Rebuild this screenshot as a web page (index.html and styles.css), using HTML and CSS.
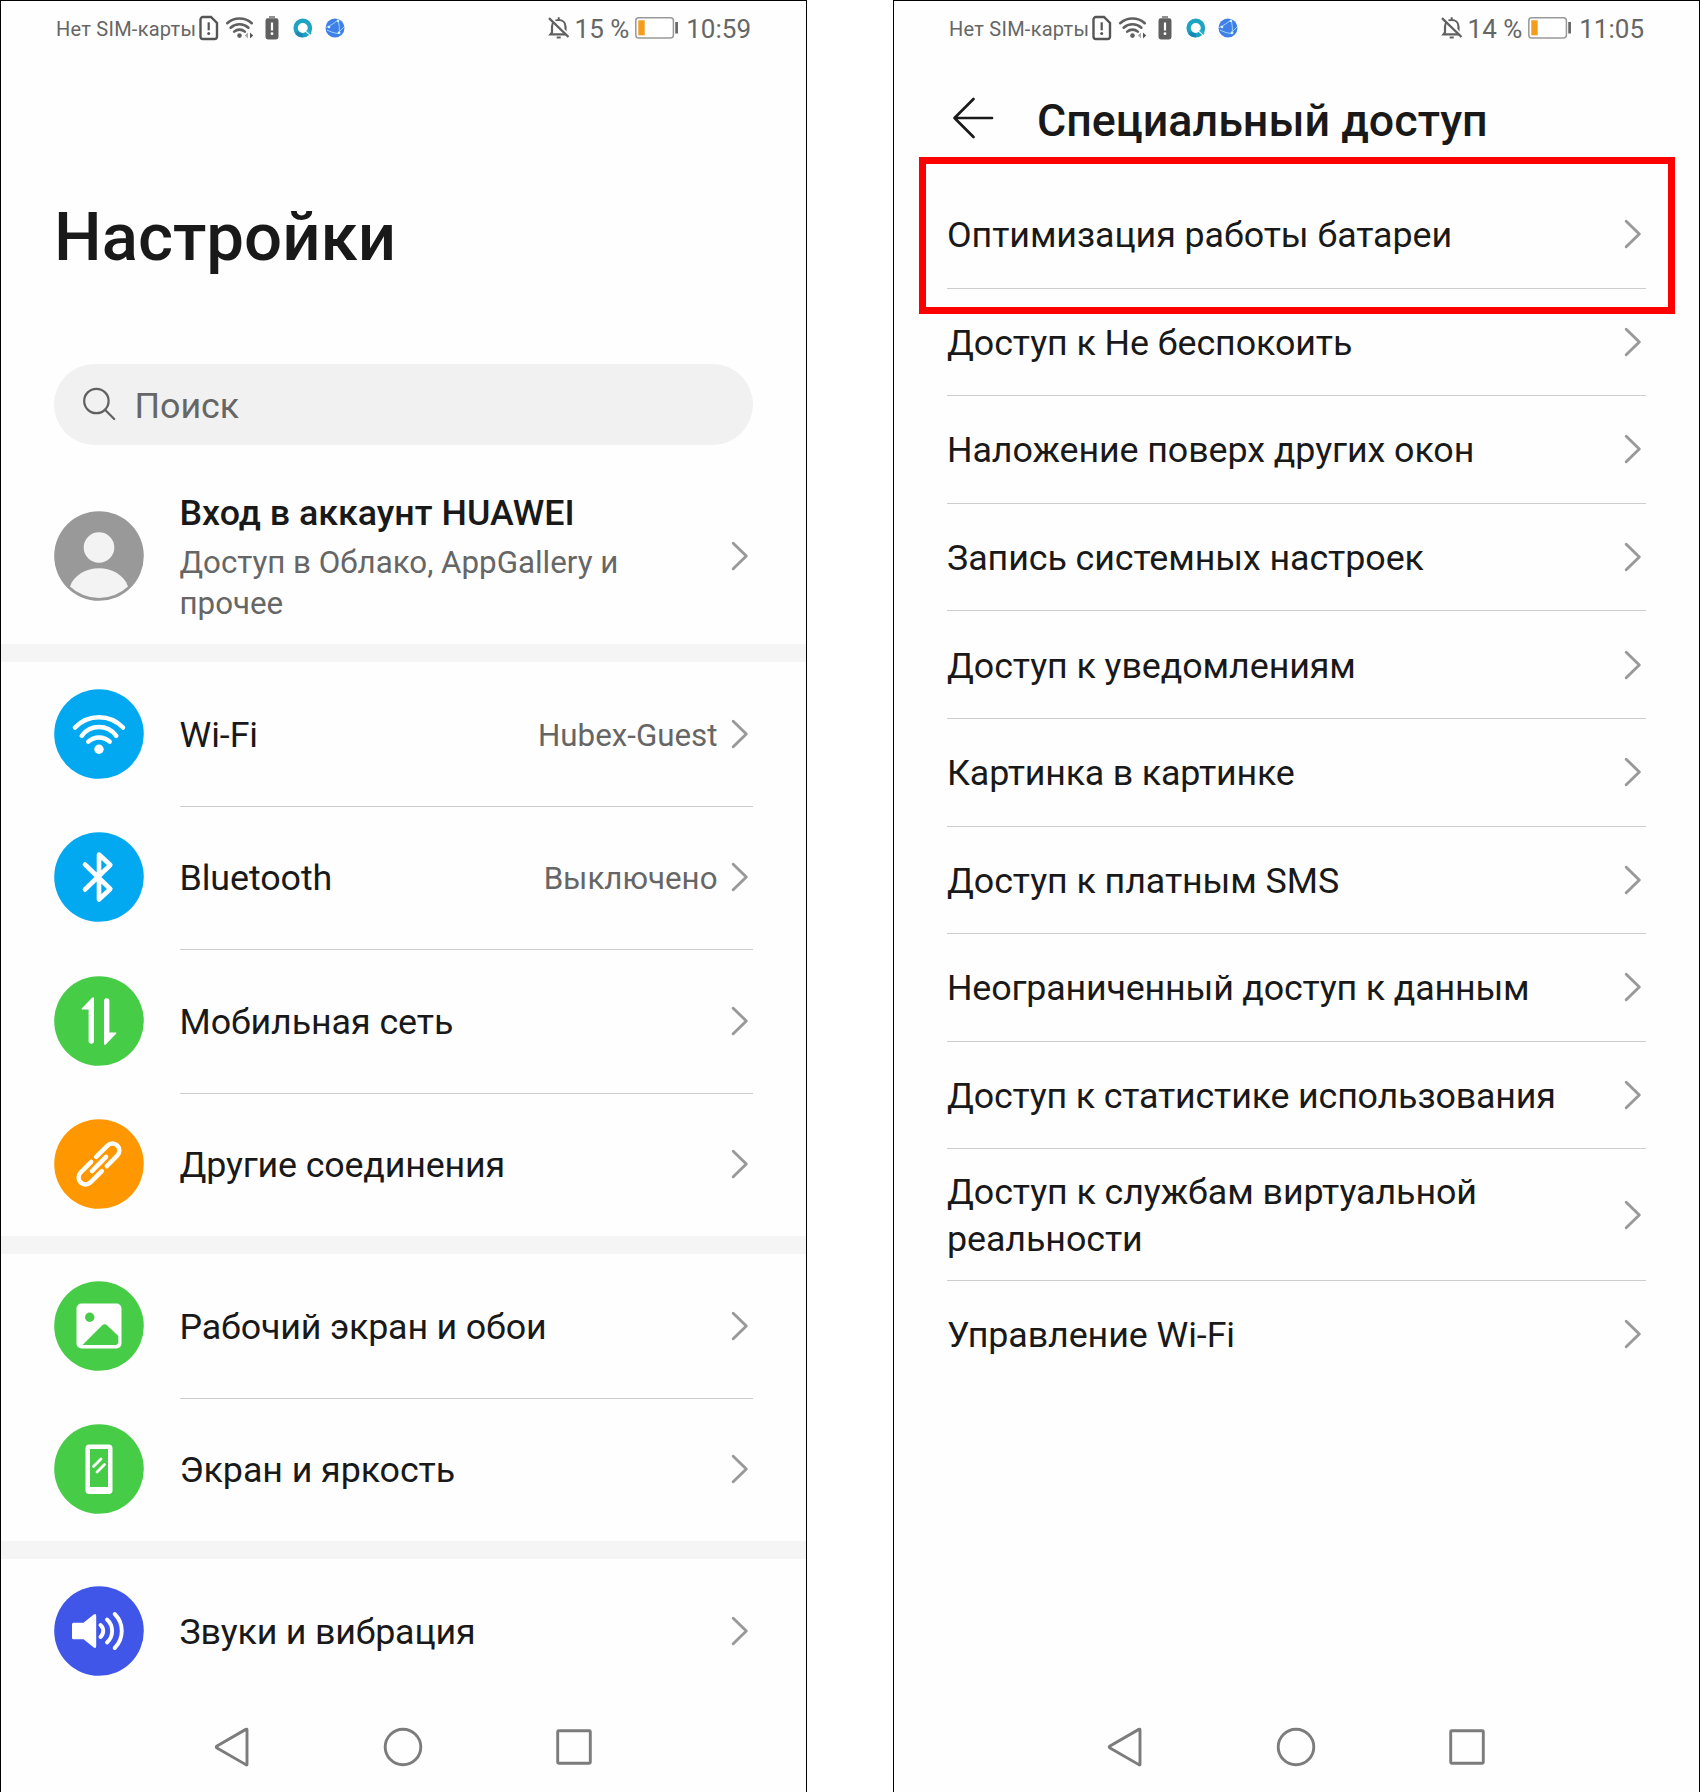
FILE: index.html
```html
<!DOCTYPE html>
<html lang="ru">
<head>
<meta charset="utf-8">
<title>Настройки</title>
<link rel="stylesheet" href="styles.css">
</head>
<body>
<svg class="sprite" aria-hidden="true">
  <symbol id="chevron" viewBox="0 0 18 30"><path d="M2.200 2.200 15.300 15 2.200 27.800" fill="none" stroke="#999" stroke-width="2.900" stroke-linecap="round" stroke-linejoin="round"/></symbol>
  <symbol id="sim" viewBox="0 0 20 26"><path d="M4 2h8l6 6v13.500a2.500 2.500 0 0 1-2.500 2.500H4a2.500 2.500 0 0 1-2.500-2.500v-17A2.500 2.500 0 0 1 4 2z" fill="none" stroke="#555" stroke-width="2.400"/><path d="M9.700 7.300v8" stroke="#555" stroke-width="2.200"/><circle cx="9.700" cy="18.600" r="1.500" fill="#555"/></symbol>
  <symbol id="wifi-status" viewBox="0 0 30 26"><g fill="none" stroke="#606060" stroke-width="2.600" stroke-linecap="round"><path d="M2.200 8.200a18.500 18.500 0 0 1 24.600 0"/><path d="M5.600 12.700a13.400 13.400 0 0 1 17.800 0"/><path d="M9.200 16.600a8 8 0 0 1 10.600 0"/></g><circle cx="14.500" cy="20.600" r="2.300" fill="#606060"/><path d="M23 17.500v6l-3.200-3z" fill="#aaa"/><path d="M25 17.500v6l3.200-3z" fill="#555"/></symbol>
  <symbol id="power" viewBox="0 0 14 26"><path d="M4 1.300h6v1.400H4z" fill="#606060"/><rect x=".5" y="3.300" width="13" height="21.200" rx="2.400" fill="#606060"/><path d="M7 7.500v8" stroke="#fff" stroke-width="2.200"/><circle cx="7" cy="18.700" r="1.400" fill="#fff"/></symbol>
  <symbol id="ring" viewBox="0 0 20 20"><circle cx="9.800" cy="10" r="7.200" fill="none" stroke="#1fa3c2" stroke-width="4.400"/><path d="M3.500 14.500A7.300 7.300 0 0 0 9.800 17.300" fill="none" stroke="#1b87b4" stroke-width="3.800"/><path d="M11.500 12 19 18.500" stroke="#fff" stroke-width="1.600"/><path d="M13.700 12.200 18 16" stroke="#25b4cc" stroke-width="2"/></symbol>
  <symbol id="globe" viewBox="0 0 20 20"><circle cx="10" cy="10" r="9.500" fill="#3f7fe8"/><path d="M13 1.200C14 6 15 11 14 16M1 9.500C6 7.500 9 5 12.500 2.500M2 12c4 2 8 3.500 12 3.500M14.500 13.500 19 9" fill="none" stroke="#a9dcf5" stroke-width=".9"/><g fill="#d5f0fb"><circle cx="13" cy="3" r="1.300"/><circle cx="4" cy="9" r="1.300"/><circle cx="14" cy="14.800" r="1.400"/></g></symbol>
  <symbol id="bell" viewBox="0 0 24 24"><path d="M5 17V10.500C5 6.500 8 4 11.700 4S18.500 6.500 18.500 10.500V16l1.700 2.400H3.500L5 16.500" fill="none" stroke="#606060" stroke-width="2.200"/><path d="M11.700 1.300V4M9.700 21.600h4" stroke="#606060" stroke-width="2"/><path d="M3.600 1.300 23 20" stroke="#fff" stroke-width="2"/><path d="M2 2.200 21.500 21" stroke="#606060" stroke-width="2.300"/></symbol>
  <symbol id="battery" viewBox="0 0 44 22"><rect x=".8" y=".8" width="37.600" height="20.200" rx="3" fill="#fff" stroke="#999" stroke-width="1.500"/><rect x="3.300" y="3.300" width="6.400" height="15" fill="#f49c1c"/><path d="M41.600 5v11.500" stroke="#666" stroke-width="2.700"/></symbol>
  <symbol id="nav-back" viewBox="0 0 40 40"><path d="M34 2.800V37.200Q34 38.500 32.800 37.600L4 21Q2.400 20 4 19L32.800 2.400Q34 1.800 34 2.800z" fill="none" stroke="#7c7c7c" stroke-width="2.900"/></symbol>
  <symbol id="nav-home" viewBox="0 0 40 40"><circle cx="20" cy="20" r="17.800" fill="none" stroke="#7c7c7c" stroke-width="2.900"/></symbol>
  <symbol id="nav-recent" viewBox="0 0 40 40"><rect x="3.700" y="3.700" width="32.600" height="32.600" rx="1" fill="none" stroke="#7c7c7c" stroke-width="2.900"/></symbol>
</svg>

<main class="screens">
  <section class="phone">
    <header class="status">
      <span class="carrier">Нет SIM-карты</span>
      <svg class="s-sim"><use href="#sim"/></svg>
      <svg class="s-wifi"><use href="#wifi-status"/></svg>
      <svg class="s-power"><use href="#power"/></svg>
      <svg class="s-ring"><use href="#ring"/></svg>
      <svg class="s-globe"><use href="#globe"/></svg>
      <div class="status-right">
        <svg class="s-bell"><use href="#bell"/></svg>
        <span class="percent">15 %</span>
        <svg class="s-battery"><use href="#battery"/></svg>
        <time class="clock">10:59</time>
      </div>
    </header>

    <h1 class="page-title">Настройки</h1>

    <div class="search">
      <svg class="search-icon" viewBox="0 0 36 36"><g fill="none" stroke="#606060" stroke-width="2.200" stroke-linecap="round"><circle cx="14.400" cy="15" r="12.200"/><path d="M23.200 24 32.200 33"/></g></svg>
      <span class="search-text">Поиск</span>
    </div>

    <div class="account">
      <svg class="badge" viewBox="-45 -45 90 90"><circle r="44.800" fill="#999"/><circle cy="-8.500" r="15.300" fill="#f3f3f3"/><path d="M-29 30.500C-25 19-13 12.300 0 12.300S25 19 29 30.500A42 42 0 0 1-29 30.500z" fill="#f3f3f3"/></svg>
      <div class="account-text">
        <div class="account-title">Вход в аккаунт HUAWEI</div>
        <div class="account-sub">Доступ в Облако, AppGallery и<br>прочее</div>
      </div>
      <svg class="chevron"><use href="#chevron"/></svg>
    </div>

    <div class="group">
      <div class="item">
        <svg class="badge" viewBox="-45 -45 90 90"><circle r="44.800" fill="#03a9f0"/><g fill="none" stroke="#fff" stroke-width="4.500" stroke-linecap="round"><path d="M-24-6.500A33 33 0 0 1 24-6.500"/><path d="M-17.300 1.800A21.500 21.500 0 0 1 17.300 1.800"/><path d="M-10.700 7.700A15.500 15.500 0 0 1 10.700 7.700"/></g><circle cy="15.300" r="4.700" fill="#fff"/></svg>
        <div class="item-body"><span class="label">Wi-Fi</span><span class="value">Hubex-Guest</span><svg class="chevron"><use href="#chevron"/></svg></div>
      </div>
      <div class="item">
        <svg class="badge" viewBox="-45 -45 90 90"><circle r="44.800" fill="#03a9f0"/><path d="M-14-12.500 11.300 12 0 22.500V-22.500L11.300-12-14 12.500" fill="none" stroke="#fff" stroke-width="4.600" stroke-linecap="round" stroke-linejoin="round"/></svg>
        <div class="item-body"><span class="label">Bluetooth</span><span class="value">Выключено</span><svg class="chevron"><use href="#chevron"/></svg></div>
      </div>
      <div class="item">
        <svg class="badge" viewBox="-45 -45 90 90"><circle r="44.800" fill="#47cc47"/><g fill="#fff"><path d="M-17.500-12.200-7-23.300Q-5-24.800-5-22.300V20a2.600 2.600 0 0 1-5.400 0V-11.500H-17z"/><path d="M17.500 12.200 7 23.300Q5 24.800 5 22.300V-20a2.600 2.600 0 0 1 5.400 0V11.500H17z"/></g></svg>
        <div class="item-body"><span class="label">Мобильная сеть</span><svg class="chevron"><use href="#chevron"/></svg></div>
      </div>
      <div class="item">
        <svg class="badge" viewBox="-45 -45 90 90"><circle r="44.800" fill="#ff9800"/><g transform="rotate(-45)" fill="none" stroke="#fff" stroke-width="4.400" stroke-linecap="round"><path d="M3-7H19A7 7 0 0 1 19 7H4"/><path d="M-3 7H-19A7 7 0 0 1-19-7H-4"/><path d="M-10 0H10"/></g></svg>
        <div class="item-body"><span class="label tight">Другие соединения</span><svg class="chevron"><use href="#chevron"/></svg></div>
      </div>
    </div>

    <div class="group">
      <div class="item">
        <svg class="badge" viewBox="-45 -45 90 90"><circle r="44.800" fill="#47cc47"/><rect x="-22.500" y="-22.500" width="45" height="45" rx="5" fill="#fff"/><circle cx="-9.300" cy="-8.700" r="4.700" fill="#47cc47"/><path d="M-16.500 19 3-.5Q5.500-3 8-.7L19.300 10V17L17.300 19z" fill="#47cc47"/></svg>
        <div class="item-body"><span class="label tight">Рабочий экран и обои</span><svg class="chevron"><use href="#chevron"/></svg></div>
      </div>
      <div class="item">
        <svg class="badge" viewBox="-45 -45 90 90"><circle r="44.800" fill="#47cc47"/><rect x="-13.500" y="-24.500" width="27" height="49.500" rx="3.800" fill="#fff"/><path d="M-9-20H9V18H-9z" fill="#47cc47"/><path d="M-5.500-2.500 2-10M-2 3 5.500-4.500" stroke="#fff" stroke-width="2.800" stroke-linecap="round"/></svg>
        <div class="item-body"><span class="label">Экран и яркость</span><svg class="chevron"><use href="#chevron"/></svg></div>
      </div>
    </div>

    <div class="group">
      <div class="item">
        <svg class="badge" viewBox="-45 -45 90 90"><circle r="44.800" fill="#3f56e8"/><path d="M-25.500-8.300H-15.500L-5.500-16.300Q-2.800-18-2.800-15V15Q-2.800 18-5.500 16.300L-15.500 8.300H-25.500Q-27 8.300-27 6.800V-6.800Q-27-8.300-25.500-8.300z" fill="#fff"/><g fill="none" stroke="#fff" stroke-width="3.900" stroke-linecap="round"><path d="M1.500-6A8 8 0 0 1 1.500 6"/><path d="M8-11.500A15.500 15.500 0 0 1 8 11.500"/><path d="M15.700-17A24 24 0 0 1 15.700 17"/></g></svg>
        <div class="item-body"><span class="label tight">Звуки и вибрация</span><svg class="chevron"><use href="#chevron"/></svg></div>
      </div>
    </div>

    <nav class="nav">
      <svg><use href="#nav-back"/></svg>
      <svg><use href="#nav-home"/></svg>
      <svg><use href="#nav-recent"/></svg>
    </nav>
  </section>

  <section class="phone">
    <header class="status">
      <span class="carrier">Нет SIM-карты</span>
      <svg class="s-sim"><use href="#sim"/></svg>
      <svg class="s-wifi"><use href="#wifi-status"/></svg>
      <svg class="s-power"><use href="#power"/></svg>
      <svg class="s-ring"><use href="#ring"/></svg>
      <svg class="s-globe"><use href="#globe"/></svg>
      <div class="status-right">
        <svg class="s-bell"><use href="#bell"/></svg>
        <span class="percent">14 %</span>
        <svg class="s-battery"><use href="#battery"/></svg>
        <time class="clock">11:05</time>
      </div>
    </header>

    <div class="toolbar">
      <svg class="back" viewBox="0 0 44 44"><path d="M22.500 3 3.500 22 22.500 41M3.500 22H41" fill="none" stroke="#1a1a1a" stroke-width="2.700" stroke-linecap="round" stroke-linejoin="round"/></svg>
      <h2 class="toolbar-title">Специальный доступ</h2>
    </div>

    <div class="access">
      <div class="row"><span class="label">Оптимизация работы батареи</span><svg class="chevron"><use href="#chevron"/></svg></div>
      <div class="row"><span class="label">Доступ к Не беспокоить</span><svg class="chevron"><use href="#chevron"/></svg></div>
      <div class="row"><span class="label">Наложение поверх других окон</span><svg class="chevron"><use href="#chevron"/></svg></div>
      <div class="row"><span class="label">Запись системных настроек</span><svg class="chevron"><use href="#chevron"/></svg></div>
      <div class="row"><span class="label">Доступ к уведомлениям</span><svg class="chevron"><use href="#chevron"/></svg></div>
      <div class="row"><span class="label tight">Картинка в картинке</span><svg class="chevron"><use href="#chevron"/></svg></div>
      <div class="row"><span class="label">Доступ к платным SMS</span><svg class="chevron"><use href="#chevron"/></svg></div>
      <div class="row"><span class="label tight">Неограниченный доступ к данным</span><svg class="chevron"><use href="#chevron"/></svg></div>
      <div class="row"><span class="label tight">Доступ к статистике использования</span><svg class="chevron"><use href="#chevron"/></svg></div>
      <div class="row row-tall"><span class="label">Доступ к службам виртуальной<br>реальности</span><svg class="chevron"><use href="#chevron"/></svg></div>
      <div class="row"><span class="label">Управление Wi-Fi</span><svg class="chevron"><use href="#chevron"/></svg></div>
      <div class="highlight"></div>
    </div>

    <nav class="nav">
      <svg><use href="#nav-back"/></svg>
      <svg><use href="#nav-home"/></svg>
      <svg><use href="#nav-recent"/></svg>
    </nav>
  </section>
</main>
</body>
</html>
```
FILE: styles.css
```css
* { box-sizing: border-box; }

body {
  margin: 0;
  background: #fff;
  color: #191919;
  font-family: Roboto, "Noto Sans", sans-serif;
}

svg { display: block; flex: none; }
.sprite { position: absolute; width: 0; height: 0; }

.screens {
  display: flex;
  justify-content: space-between;
  width: 1700px;
  height: 1792px;
}

.phone {
  display: flex;
  flex-direction: column;
  width: 807px;
  height: 1792px;
  border: 1px solid #000;
  border-bottom: 0;
  background: #fefefe;
}

/* Status bar */
.status {
  display: flex;
  align-items: center;
  height: 53px;
  padding: 0 55px;
  color: #666;
  white-space: nowrap;
}
.carrier { width: 143px; padding-top: 3px; font-size: 20px; letter-spacing: 0.25px; }
.s-sim { width: 20px; height: 26px; }
.s-wifi { width: 30px; height: 26px; margin-left: 6px; }
.s-power { width: 14px; height: 26px; margin-left: 10px; }
.s-ring { width: 20px; height: 20px; margin-left: 14px; }
.s-globe { width: 20px; height: 20px; margin-left: 12px; }
.status-right { display: flex; align-items: center; margin-left: auto; }
.s-bell { width: 24px; height: 24px; }
.percent { margin-left: 4px; padding-top: 2px; font-size: 26px; }
.s-battery { width: 44px; height: 22px; margin-left: 6px; }
.clock { margin-left: 7px; padding-top: 2px; font-size: 26px; }

/* Settings home */
.page-title {
  height: 80px;
  margin: 143px 0 0 53px;
  font-size: 67.2px;
  font-weight: 500;
  line-height: 80px;
}
.search {
  display: flex;
  align-items: center;
  height: 81px;
  margin: 86.500px 53px 0;
  padding-left: 28px;
  border-radius: 41px;
  background: #f1f1f1;
  color: #666;
  font-size: 35.800px;
}
.search-icon { width: 36px; height: 36px; }
.search-text { margin-left: 16.500px; padding-top: 4px; }

.account {
  display: flex;
  align-items: center;
  height: 199.500px;
  padding: 23px 54px 0 53px;
}
.account-text { flex: 1; margin-left: 35.500px; }
.account-title { margin-bottom: 2.500px; font-size: 35.800px; font-weight: 500; line-height: 52px; }
.account-sub { color: #666; font-size: 31.300px; line-height: 41.500px; }

.badge { width: 90px; height: 90px; }
.chevron { width: 18px; height: 30px; }

.group { border-top: 18px solid #f5f5f5; }
.item { display: flex; align-items: center; height: 143.500px; padding-left: 53px; }
.item-body {
  display: flex;
  flex: 1;
  align-items: center;
  align-self: stretch;
  margin: 0 53px -1px 35.500px;
  border-bottom: 1px solid #cdcdcd;
}
.item:last-child .item-body { border-bottom-color: transparent; }
.label { flex: 1; padding-top: 3px; font-size: 35.800px; letter-spacing: -0.07px; line-height: 47px; }
.label.tight { letter-spacing: -0.17px; }
.value { padding-top: 3px; margin-right: 13px; color: #666; font-size: 31.300px; }
.item-body .chevron { margin-right: 4.500px; }
.account .chevron { margin-right: 3.500px; }

.nav {
  display: flex;
  justify-content: space-between;
  width: 381px;
  margin: auto auto 25px 211.500px;
}
.nav svg { width: 40px; height: 40px; }

/* Special access */
.toolbar { display: flex; align-items: center; height: 127px; padding-left: 57px; }
.back { width: 44px; height: 44px; }
.toolbar-title { margin: 6px 0 0 42px; font-size: 44.800px; font-weight: 500; line-height: 56px; }

.access { position: relative; padding: 0 53px; }
.row {
  display: flex;
  align-items: center;
  height: 107.600px;
  border-bottom: 1px solid #cdcdcd;
}
.row-tall { height: 131.500px; }
.row:nth-last-child(2) { border-bottom-color: transparent; }
.row .chevron { margin-right: 4px; }
.highlight {
  position: absolute;
  top: -24px;
  left: 25px;
  width: 756px;
  height: 157px;
  border: 7px solid #fe0000;
}
```
